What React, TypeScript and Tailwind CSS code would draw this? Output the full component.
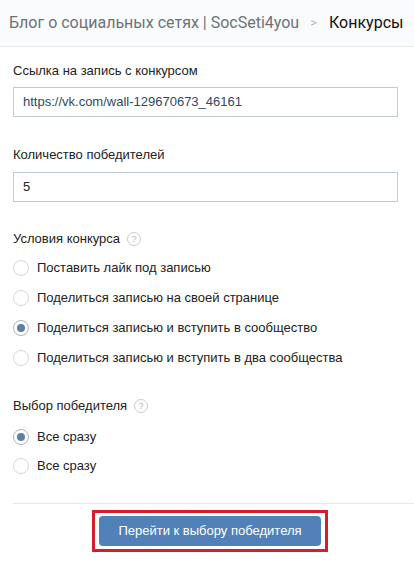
import React, { useState } from 'react';

const HelpIcon = () => (
  <span className="ml-[7px] inline-flex h-[14px] w-[14px] items-center justify-center rounded-full border border-[#c5ccd4] text-[9px] leading-none text-[#b0b8c2]">
    ?
  </span>
);

interface RadioProps {
  label: string;
  checked: boolean;
  onClick: () => void;
}

const Radio: React.FC<RadioProps> = ({ label, checked, onClick }) => (
  <div onClick={onClick} className="flex h-[30px] cursor-pointer items-center">
    <span
      className={`flex h-[16px] w-[16px] items-center justify-center rounded-full border ${
        checked ? 'border-[#aab6c4]' : 'border-[#d3d9de]'
      }`}
    >
      {checked && <span className="h-[8px] w-[8px] rounded-full bg-[#5e7fa6]" />}
    </span>
    <span className="ml-[8px] text-[13px] text-[#222]">{label}</span>
  </div>
);

export default function App() {
  const [condition, setCondition] = useState(2);
  const [mode, setMode] = useState(0);

  const conditions = [
    'Поставить лайк под записью',
    'Поделиться записью на своей странице',
    'Поделиться записью и вступить в сообщество',
    'Поделиться записью и вступить в два сообщества',
  ];

  return (
    <div className="h-[561px] w-[414px] overflow-hidden bg-white font-['Liberation_Sans',Arial,sans-serif]">
      {/* header */}
      <div className="flex h-[47px] items-center whitespace-nowrap border-b border-[#e7e8ec] bg-[#fafbfc] pl-[9px] font-['Roboto',sans-serif] text-[16px]">
        <span className="text-[#6d7278]">Блог о социальных сетях | SocSeti4you</span>
        <span className="ml-[11px] mr-[12px] text-[13px] text-[#b4bac1]">&gt;</span>
        <span className="text-[#111]">Конкурсы</span>
      </div>

      <div className="pl-[13px]">
        <div className="pr-[16px] pt-[16px]">
          <div className="text-[13px] leading-[16px] text-[#222]">Ссылка на запись с конкурсом</div>
          <div className="mt-[8px] flex h-[30px] items-center border border-[#c0cad5] px-[9px] text-[13px] text-[#2e4a66]">
            https://vk.com/wall-129670673_46161
          </div>
        </div>

        <div className="pr-[16px] pt-[30px]">
          <div className="text-[13px] leading-[16px] text-[#222]">Количество победителей</div>
          <div className="mt-[9px] flex h-[30px] items-center border border-[#c0cad5] px-[9px] text-[13px] text-[#222]">
            5
          </div>
        </div>

        <div className="pt-[29px]">
          <div className="flex items-center text-[13px] leading-[16px] text-[#222]">
            Условия конкурса
            <HelpIcon />
          </div>
          <div className="mt-[6px]">
            {conditions.map((c, i) => (
              <Radio key={i} label={c} checked={condition === i} onClick={() => setCondition(i)} />
            ))}
          </div>
        </div>

        <div className="pt-[25px]">
          <div className="flex items-center text-[13px] leading-[16px] text-[#222]">
            Выбор победителя
            <HelpIcon />
          </div>
          <div className="mt-[8px]">
            <Radio label="Все сразу" checked={mode === 0} onClick={() => setMode(0)} />
            <div className="-mt-[1px]">
              <Radio label="Все сразу" checked={mode === 1} onClick={() => setMode(1)} />
            </div>
          </div>
        </div>

        <div className="mt-[22px] border-t border-[#e7e8ec]" />
      </div>

      <div className="mt-[6px] flex justify-center pl-[6px]">
        <div className="border-[3px] border-[#d21f2d] px-[4px] py-[3px]">
          <button className="h-[30px] w-[222px] rounded-[4px] bg-[#5181b8] text-[13px] text-white">
            Перейти к выбору победителя
          </button>
        </div>
      </div>
    </div>
  );
}
